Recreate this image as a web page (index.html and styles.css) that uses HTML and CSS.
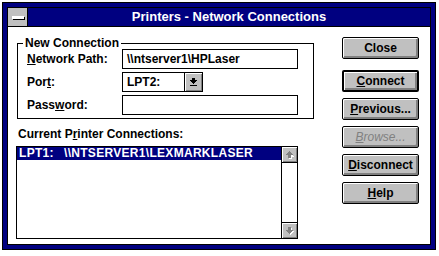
FILE: index.html
```html
<!DOCTYPE html>
<html>
<head>
<meta charset="utf-8">
<link rel="stylesheet" href="styles.css">
</head>
<body>
<div class="window">
  <div class="frame">
    <div class="titlebar">
      <div class="sysmenu"><span class="dash"></span></div>
      <div class="title">Printers - Network Connections</div>
    </div>
    <div class="client">
      <div class="left">
        <fieldset class="group">
          <legend>New Connection</legend>
          <div class="rows">
            <div class="row"><span class="lbl"><u>N</u>etwork Path:</span><div class="field">\\ntserver1\HPLaser</div></div>
            <div class="row"><span class="lbl">Por<u>t</u>:</span>
              <div class="combo"><span class="val">LPT2:</span>
                <span class="drop"><svg width="7" height="9" viewBox="0 0 7 9" shape-rendering="crispEdges"><path d="M2 0h3v2h2l-3.5 4L0 2h2z" fill="#000"/><rect x="0" y="7" width="7" height="1" fill="#000"/></svg></span>
              </div>
            </div>
            <div class="row"><span class="lbl">Pass<u>w</u>ord:</span><div class="field"></div></div>
          </div>
        </fieldset>
        <div class="listlabel">Current P<u>r</u>inter Connections:</div>
        <div class="listbox">
          <div class="items">
            <div class="item sel"><span class="port">LPT1:</span>\\NTSERVER1\LEXMARKLASER</div>
          </div>
          <div class="vscroll">
            <div class="sbtn"><svg width="8" height="8" viewBox="0 0 8 8" shape-rendering="crispEdges"><path d="M1 5L4 1l3 4H5v3H2V5z" fill="#fff" transform="translate(1,1)"/><path d="M0 4L3.5 0 7 4H5v3H2V4z" fill="#808080"/></svg></div>
            <div class="track"></div>
            <div class="sbtn"><svg width="8" height="8" viewBox="0 0 8 8" shape-rendering="crispEdges"><path d="M2 0h3v3h2L3.5 7 0 3h2z" fill="#fff" transform="translate(1,1)"/><path d="M2 0h3v3h2L3.5 7 0 3h2z" fill="#808080"/></svg></div>
          </div>
        </div>
      </div>
      <div class="buttons">
        <div class="btn close">Close</div>
        <div class="btn default"><span><u>C</u>onnect</span></div>
        <div class="btn"><span><u>P</u>revious...</span></div>
        <div class="btn disabled"><span><u>B</u>rowse...</span></div>
        <div class="btn"><span><u>D</u>isconnect</span></div>
        <div class="btn"><span><u>H</u>elp</span></div>
      </div>
    </div>
  </div>
</div>
</body>
</html>
```
FILE: styles.css
```css
body {
  margin: 0;
  background: #fff;
  font-family: "Liberation Sans", Arial, sans-serif;
  font-weight: bold;
  font-size: 12px;
  color: #000;
}
u { text-decoration-thickness: 1px; text-underline-offset: 1px; }
.window {
  margin: 2px 0 0 2px;
  width: 434px;
  height: 248px;
  box-sizing: border-box;
  border: 1px solid #000;
  background: #000080;
  padding: 4px;
}
.frame {
  box-sizing: border-box;
  height: 100%;
  border: 1px solid #000;
  background: #fff;
  display: flex;
  flex-direction: column;
}
.titlebar {
  height: 18px;
  flex: none;
  border-bottom: 1px solid #000;
  background: #000080;
  display: flex;
}
.sysmenu {
  width: 19px;
  border-right: 1px solid #000;
  background: #c0c0c0;
  display: flex;
  align-items: center;
  justify-content: center;
}
.dash {
  width: 12px;
  height: 2px;
  background: #fff;
  box-shadow: 1px 1px 0 #000;
  border-top: 1px solid #fff;
}
.title {
  flex: 1;
  color: #fff;
  font-size: 13px;
  line-height: 18px;
  text-align: center;
}
.client {
  flex: 1;
  display: flex;
  padding: 10px 0 0 8px;
}
.left { width: 298px; }
.group {
  margin: 0 0 0 1px;
  padding: 0 0 3px 0;
  border: 1px solid #000;
  width: 297px;
  box-sizing: border-box;
  min-width: 0;
}
.group legend {
  margin-left: 5px;
  padding: 0 2px;
  line-height: 12px;
}
.rows {
  display: flex;
  flex-direction: column;
  gap: 3px;
  padding-left: 9px;
}
.row {
  display: flex;
  align-items: center;
  height: 20px;
}
.lbl { width: 95px; }
.field {
  width: 176px;
  height: 20px;
  box-sizing: border-box;
  border: 1px solid #000;
  padding-left: 4px;
  line-height: 18px;
}
.combo {
  width: 81px;
  height: 20px;
  box-sizing: border-box;
  border: 1px solid #000;
  display: flex;
}
.combo .val { flex: 1; padding-left: 4px; line-height: 18px; }
.combo .drop {
  width: 17px;
  border-left: 1px solid #000;
  background: #c0c0c0;
  box-shadow: inset 1px 1px #fff, inset -1px -1px #808080;
  display: flex;
  align-items: center;
  justify-content: center;
}
.listlabel {
  margin: 8px 0 0 2px;
  line-height: 14px;
}
.listbox {
  margin-top: 5px;
  width: 282px;
  height: 93px;
  box-sizing: border-box;
  border: 1px solid #000;
  display: flex;
}
.items { flex: 1; }
.item {
  height: 13px;
  line-height: 13px;
  padding-left: 2px;
  white-space: nowrap;
  overflow: hidden;
  letter-spacing: 0.3px;
}
.sel { background: #000080; color: #fff; }
.port { display: inline-block; width: 45px; }
.vscroll {
  width: 16px;
  border-left: 1px solid #000;
  display: flex;
  flex-direction: column;
  box-sizing: border-box;
}
.sbtn {
  height: 15px;
  background: #c0c0c0;
  box-shadow: inset 1px 1px #fff, inset -1px -1px #808080;
  display: flex;
  align-items: center;
  justify-content: center;
}
.track {
  flex: 1;
  border-top: 1px solid #000;
  border-bottom: 1px solid #000;
  background: #fff;
}
.buttons {
  margin: 0 0 0 28px;
  display: flex;
  flex-direction: column;
  gap: 6px;
  width: 77px;
}
.btn {
  height: 22px;
  box-sizing: border-box;
  border: 1px solid #000;
  border-radius: 2px;
  background: #c0c0c0;
  box-shadow: inset 1px 1px #fff, inset -1px -1px #808080, inset -2px -2px #808080;
  display: flex;
  align-items: center;
  justify-content: center;
}
.btn.close { margin-bottom: 5px; }
.btn.default { border-width: 2px; }
.btn.disabled { color: #808080; font-style: italic; font-weight: normal; }
```
